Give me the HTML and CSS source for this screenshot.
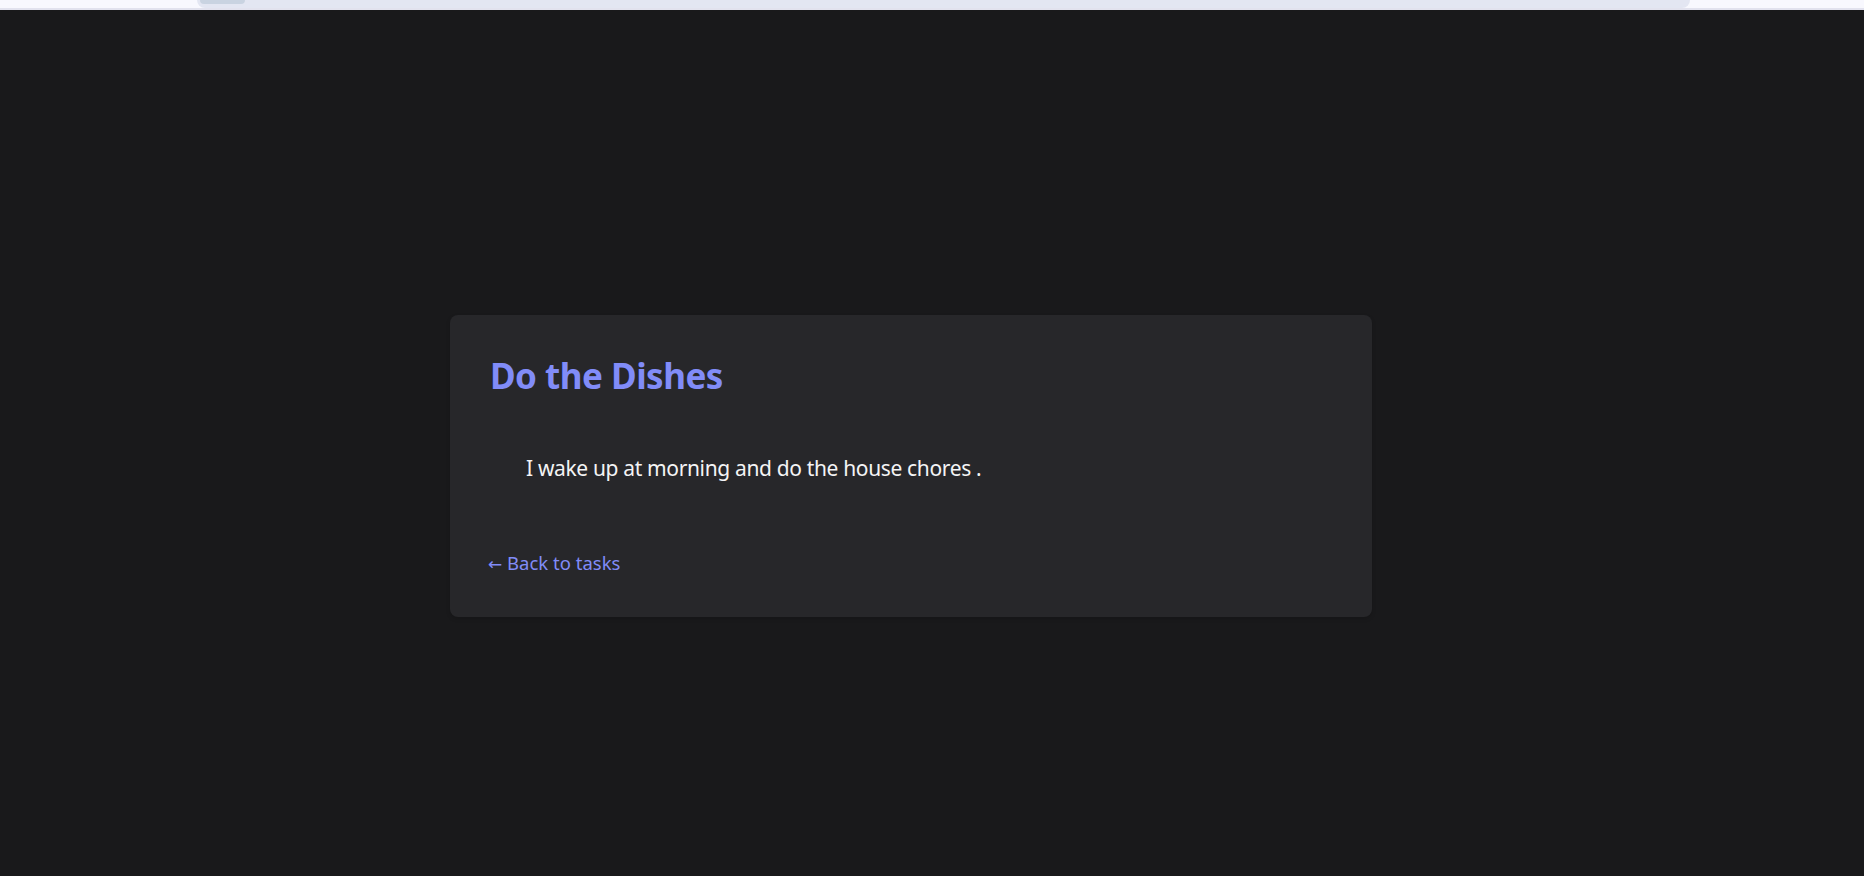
FILE: index.html
```html
<!DOCTYPE html>
<html lang="en">
<head>
<meta charset="utf-8">
<title>Do the Dishes</title>
<link rel="stylesheet" href="styles.css">
</head>
<body>
<div class="topstrip">
  <div class="topbar"><div class="topdot"></div></div>
</div>
<main class="page">
  <section class="card">
    <h1 class="title">Do the Dishes</h1>
    <p class="desc">I wake up at morning and do the house chores .</p>
    <a class="back" href="#"><span class="arrow">←</span> Back to tasks</a>
  </section>
</main>
</body>
</html>
```

FILE: styles.css
```css
* { box-sizing: border-box; }
html, body { margin: 0; padding: 0; }
body {
  background: #19191b;
  font-family: "Noto Sans", "Open Sans", sans-serif;
  height: 876px;
  overflow: hidden;
}
.topstrip {
  height: 10px;
  background: #f8f8fe;
  border-bottom: 2px solid #e2e2ee;
  display: flex;
  padding-left: 197px;
}
.topbar {
  width: 1493px;
  height: 8px;
  background: #e3e6f2;
  border-radius: 0 0 16px 16px;
  display: flex;
  padding-left: 3px;
}
.topdot {
  width: 45px;
  height: 4px;
  background: #c9d3e1;
  border-radius: 0 0 22px 22px;
}
.page {
  display: flex;
  padding: 305px 0 0 450px;
}
.card {
  width: 922px;
  background: #27272a;
  border-radius: 8px;
  padding: 39px 40px 40px 40px;
  display: flex;
  flex-direction: column;
  align-items: flex-start;
  box-shadow: 0 2px 4px rgba(0,0,0,0.15);
}
.title {
  margin: 0;
  font-size: 35px;
  line-height: 44px;
  font-weight: 700;
  letter-spacing: -0.5px;
  color: #818cf8;
}
.desc {
  margin: 54px 0 0 0;
  padding-left: 36px;
  font-size: 21px;
  line-height: 32px;
  letter-spacing: -0.35px;
  color: #f4f4f5;
}
.back {
  margin-top: 66px;
  margin-left: -2px;
  font-size: 18.5px;
  line-height: 26px;
  color: #818cf8;
  text-decoration: none;
}
.arrow {
  font-family: "DejaVu Sans", sans-serif;
  font-size: 17px;
}
```
